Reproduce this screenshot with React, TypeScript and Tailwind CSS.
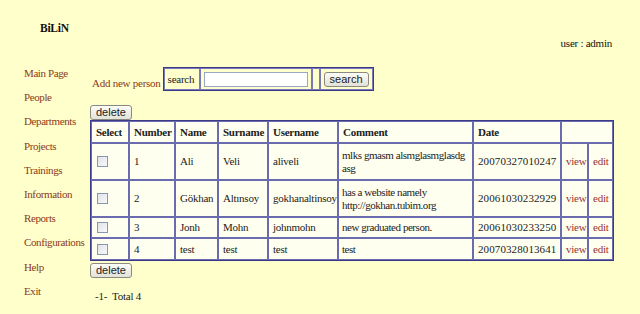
import React from "react"

const navItems = [
  "Main Page",
  "People",
  "Departments",
  "Projects",
  "Trainings",
  "Information",
  "Reports",
  "Configurations",
  "Help",
  "Exit",
]

const people = [
  { n: "1", name: "Ali", surname: "Veli", user: "aliveli", comment: "mlks gmasm alsmglasmglasdg asg", date: "20070327010247", h: "h-[37px]" },
  { n: "2", name: "Gökhan", surname: "Altınsoy", user: "gokhanaltinsoy", comment: "has a website namely http://gokhan.tubim.org", date: "20061030232929", h: "h-[37px]" },
  { n: "3", name: "Jonh", surname: "Mohn", user: "johnmohn", comment: "new graduated person.", date: "20061030233250", h: "h-[21px]" },
  { n: "4", name: "test", surname: "test", user: "test", comment: "test", date: "20070328013641", h: "h-[22px]" },
]

function OldButton({ label }: { label: string }) {
  return (
    <button className="h-[15px] rounded-[3px] border border-[#8a8a80] bg-gradient-to-b from-[#fdfdf8] to-[#e2e2d8] px-[5px] font-[family-name:Liberation_Sans,sans-serif] text-[11px] leading-[13px] tracking-normal text-[#222]">
      {label}
    </button>
  )
}

const td = "border border-[#6b6bb0] px-[4px] align-middle"

export default function App() {
  return (
    <div className="h-[314px] w-[640px] overflow-hidden bg-[#ffffcc] font-[family-name:Liberation_Serif,serif] text-[11px] leading-[13px] tracking-[-0.25px] text-[#222]">
      <div className="flex h-[61px] justify-between">
        <div className="pl-[40px] pt-[22px] text-[11.5px] font-bold text-[#111]">BiLiN</div>
        <div className="pr-[28px] pt-[37px] text-[#111]">user : admin</div>
      </div>

      <div className="flex">
        <nav className="flex w-[90px] flex-col pl-[24px] tracking-[-0.4px]">
          {navItems.map((item) => (
            <a key={item} className="leading-[24.2px] text-[#8c3a17]">
              {item}
            </a>
          ))}
        </nav>

        <main className="flex flex-col items-start pt-[6px]">
          <div className="flex items-end">
            <span className="mb-[1px] mr-[2px] whitespace-nowrap pl-[2px] text-[#8c3a17]">Add new person</span>
            <table className="h-[24px] border-separate border-spacing-0 border border-[#3a3a88]">
              <tbody>
                <tr>
                  <td className="w-[36px] border border-[#7a7ab8] px-[3px] align-middle">search</td>
                  <td className="w-[112px] border border-[#7a7ab8] px-[3px] align-middle">
                    <div className="h-[15px] w-[104px] border border-[#9aa6c6] bg-white" />
                  </td>
                  <td className="w-[8px] border border-[#7a7ab8]" />
                  <td className="w-[53px] border border-[#7a7ab8] px-[3px] align-middle">
                    <OldButton label="search" />
                  </td>
                </tr>
              </tbody>
            </table>
          </div>

          <div className="mt-[14px]">
            <OldButton label="delete" />
          </div>

          <table className="w-[522px] table-fixed border-separate border-spacing-0 border border-[#3a3a88] bg-[#fffff0]">
            <colgroup>
              <col className="w-[38px]" />
              <col className="w-[46px]" />
              <col className="w-[43px]" />
              <col className="w-[50px]" />
              <col className="w-[70px]" />
              <col className="w-[135px]" />
              <col className="w-[88px]" />
              <col className="w-[27px]" />
              <col className="w-[25px]" />
            </colgroup>
            <thead>
              <tr className="h-[22px] text-left font-bold">
                <th className={td}>Select</th>
                <th className={td}>Number</th>
                <th className={td}>Name</th>
                <th className={td}>Surname</th>
                <th className={td}>Username</th>
                <th className={td}>Comment</th>
                <th className={td}>Date</th>
                <th className={td} colSpan={2} />
              </tr>
            </thead>
            <tbody>
              {people.map((p) => (
                <tr key={p.n} className={p.h}>
                  <td className={td}>
                    <span className="ml-[1px] block h-[11px] w-[11px] border border-[#8896b0] bg-gradient-to-br from-[#dfe3ea] to-[#f8f8f8]" />
                  </td>
                  <td className={td}>{p.n}</td>
                  <td className={td}>{p.name}</td>
                  <td className={td}>{p.surname}</td>
                  <td className={`${td} whitespace-nowrap`}>{p.user}</td>
                  <td className="border border-[#6b6bb0] pl-[3px] pr-[2px] align-middle tracking-[-0.45px]">{p.comment}</td>
                  <td className={`${td} tracking-[0.1px]`}>{p.date}</td>
                  <td className={`${td} text-[#993333]`}>view</td>
                  <td className={`${td} text-[#993333]`}>edit</td>
                </tr>
              ))}
            </tbody>
          </table>

          <div className="mt-[2px]">
            <OldButton label="delete" />
          </div>

          <div className="mt-[12px] pl-[5px] text-[#222]">-1-&nbsp;&nbsp;Total 4</div>
        </main>
      </div>
    </div>
  )
}
